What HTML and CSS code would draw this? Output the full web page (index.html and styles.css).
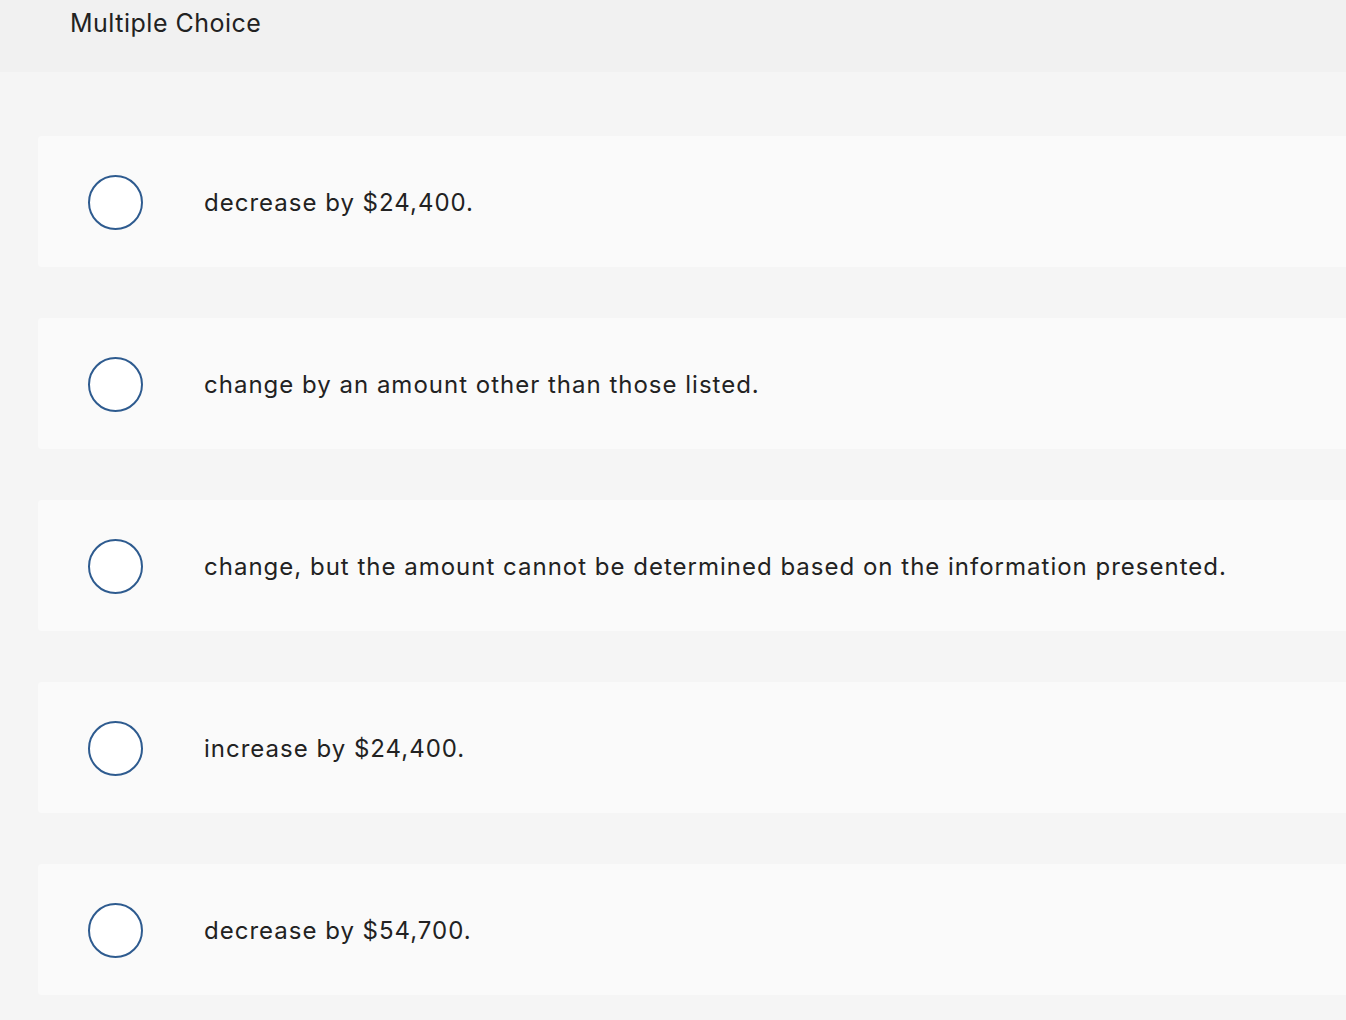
FILE: index.html
```html
<!DOCTYPE html>
<html lang="en">
<head>
<meta charset="utf-8">
<title>Multiple Choice</title>
<link rel="stylesheet" href="styles.css">
</head>
<body>
<header class="header">
  <h1 class="header-title">Multiple Choice</h1>
</header>
<main class="choices">
  <div class="choice"><span class="radio"></span><span class="choice-text">decrease by $24,400.</span></div>
  <div class="choice"><span class="radio"></span><span class="choice-text">change by an amount other than those listed.</span></div>
  <div class="choice"><span class="radio"></span><span class="choice-text">change, but the amount cannot be determined based on the information presented.</span></div>
  <div class="choice"><span class="radio"></span><span class="choice-text">increase by $24,400.</span></div>
  <div class="choice"><span class="radio"></span><span class="choice-text">decrease by $54,700.</span></div>
</main>
</body>
</html>
```
FILE: styles.css
```css
html, body {
  margin: 0;
  padding: 0;
  background: #f5f5f5;
  font-family: "Inter", "Lato", sans-serif;
  color: #222;
  overflow: hidden;
}
.header {
  background: #f1f1f1;
  height: 72px;
  padding-left: 70px;
  box-sizing: border-box;
}
.header-title {
  margin: 0;
  padding-top: 7px;
  font-size: 25px;
  font-weight: 400;
  letter-spacing: 0.5px;
  line-height: 32px;
  color: #222;
}
.choices {
  display: flex;
  flex-direction: column;
  gap: 51px;
  padding: 64px 0 0 38px;
}
.choice {
  display: flex;
  align-items: center;
  height: 131px;
  background: #fafafa;
  border-radius: 4px 0 0 4px;
  padding-left: 50px;
  box-sizing: border-box;
}
.radio {
  flex: none;
  width: 55px;
  height: 55px;
  box-sizing: border-box;
  border: 2px solid #2e5b8f;
  border-radius: 50%;
  background: #fff;
  margin-right: 61px;
  margin-top: 2px;
}
.choice-text {
  font-size: 24px;
  letter-spacing: 1px;
  line-height: 30px;
  padding-top: 3px;
}
```
